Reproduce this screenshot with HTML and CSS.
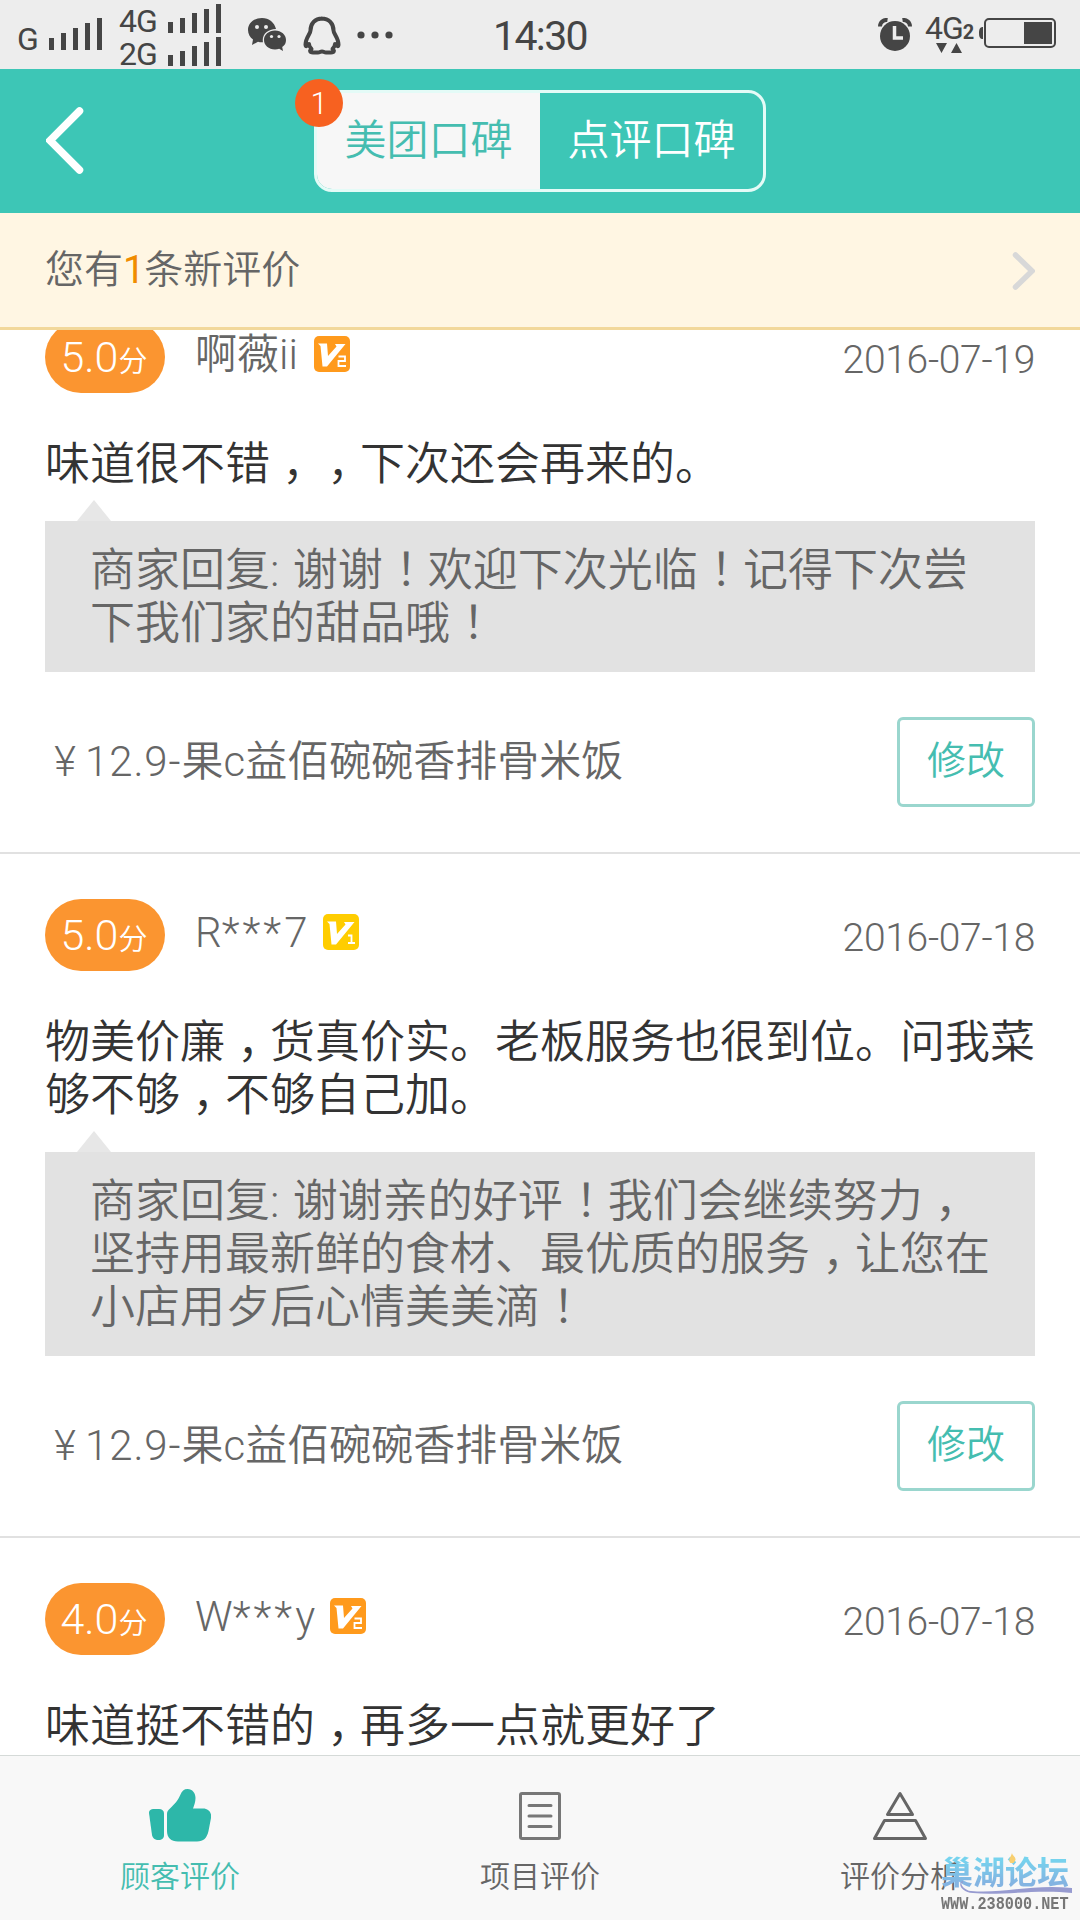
FILE: index.html
```html
<!DOCTYPE html>
<html lang="zh-CN">
<head>
<meta charset="utf-8">
<title>顾客评价</title>
<link rel="stylesheet" href="styles.css">
</head>
<body>
<div class="app">
  <div class="status">
    <div class="status-left">
      <span class="net net-g">G</span>
      <svg class="bars-one" width="54" height="32" viewBox="0 0 54 32"><path d="M0 20h5v12H0zM12 15h5v17h-5zM24 10h5v22h-5zM36 5h5v27h-5zM48 0h5v32h-5z"/></svg>
      <div class="dual">
        <div class="dual-row"><span class="net">4G</span><svg width="54" height="29" viewBox="0 0 54 29"><path d="M0 18h5v11H0zM12 14h5v15h-5zM24 9h5v20h-5zM36 5h5v24h-5zM48 0h5v29h-5z"/></svg></div>
        <div class="dual-row"><span class="net">2G</span><svg width="54" height="29" viewBox="0 0 54 29"><path d="M0 18h5v11H0zM12 14h5v15h-5zM24 9h5v20h-5zM36 5h5v24h-5zM48 0h5v29h-5z"/></svg></div>
      </div>
      <svg class="wechat" width="39" height="34" viewBox="0 0 39 34"><path d="M14 0C6 0 0 5.200 0 12c0 4 2 7.300 5 9.500L4 27l6-3.200c1.500.4 3 .6 5 .5C13.500 17 19 11.300 28 11 26.500 4.500 21 0 14 0z"/><path d="M27 12.500c-6.300 0-11 4.300-11 9.500s4.700 9.500 11 9.500c1.500 0 3-.2 4.200-.7L35 33l-.8-4C37 27.300 38 25 38 22c0-5.200-4.700-9.500-11-9.500z"/><g class="hole"><circle cx="9" cy="9" r="2"/><circle cx="18" cy="9" r="2"/><circle cx="23.500" cy="18.500" r="1.600"/><circle cx="31" cy="18.500" r="1.600"/></g></svg>
      <svg class="qq" width="38" height="39" viewBox="0 0 38 39"><path d="M19 2.500c-7 0-11.500 5-11.500 12 0 3-5 7.500-5 14 0 2 1.500 2.500 3.500-.5 0 2 1 3.500 2.500 5-2 1.500-2 3.500 1.500 3.500h5c2 0 2-1 4-1s2 1 4 1h5c3.500 0 3.500-2 1.500-3.500 1.500-1.500 2.500-3 2.500-5 2 3 3.500 2.500 3.500.5 0-6.500-5-11-5-14 0-7-4.500-12-12-12z"/></svg>
      <svg class="dots" width="36" height="8" viewBox="0 0 36 8"><circle cx="4" cy="4" r="3.600"/><circle cx="18" cy="4" r="3.600"/><circle cx="32" cy="4" r="3.600"/></svg>
    </div>
    <div class="clock">14:30</div>
    <div class="status-right">
      <svg width="34" height="34" viewBox="0 0 34 34"><circle cx="17" cy="18" r="15"/><path class="cut" d="M16.500 8v12H25"/><path class="ear" d="M2 8.500C2 4 6 1.500 9.500 2M32 8.500C32 4 28 1.500 24.500 2"/></svg>
      <div class="data"><div class="data-top"><span class="net">4G</span><b class="sim">2</b></div><svg width="26" height="10" viewBox="0 0 26 10"><path d="M0 0h11L5.500 10zM15 10h11L20.500 0z"/></svg></div>
      <svg width="78" height="30" viewBox="0 0 78 30"><path d="M4 9v12C1 21 0 19 0 15s1-6 4-6z"/><rect class="shell" x="6" y="1" width="70" height="28" rx="4"/><path d="M45 4h28v22H45z"/></svg>
    </div>
  </div>

  <header class="header">
    <svg class="back" width="38" height="67" viewBox="0 0 38 67"><path d="M33.500 4 4 33.500l29.500 29.500"/></svg>
    <div class="segment">
      <div class="seg seg-on">美团口碑</div>
      <div class="seg">点评口碑</div>
      <span class="badge">1</span>
    </div>
  </header>

  <div class="notice">
    <p class="notice-text">您有<span class="count">1</span>条新评价</p>
    <svg width="24" height="38" viewBox="0 0 24 38"><path d="M4.500 3 21 19 4.500 35"/></svg>
  </div>

  <main class="list">
    <article class="card card-scrolled">
      <div class="top">
        <div class="score">5.0<small>分</small></div>
        <div class="name name-a">啊薇ii</div>
        <svg class="level" width="36" height="36" viewBox="0 0 36 36"><rect width="36" height="36" rx="5" fill="#ff9a1c"/><path fill="#fff" d="M4 7.500h9L14 20l8.500-9.500L21 8h10.500L13 30.500H8.500L6.500 10z"/><path class="num" d="M24.500 20.500H31v4.500h-6.500v5H32"/></svg>
        <time class="date">2016-07-19</time>
      </div>
      <p class="comment">味道很不错<i>，</i><i>，</i>下次还会再来的。</p>
      <div class="reply">商家回复<span class="colon">: </span>谢谢<i>！</i>欢迎下次光临<i>！</i>记得下次尝<br>下我们家的甜品哦<i>！</i></div>
      <div class="foot"><span class="deal"><span class="yen">¥</span><span class="price">12.9-</span>果c益佰碗碗香排骨米饭</span><button class="edit">修改</button></div>
    </article>
    <article class="card">
      <div class="top">
        <div class="score">5.0<small>分</small></div>
        <div class="name name-r">R<span class="stars">***</span>7</div>
        <svg class="level" width="36" height="36" viewBox="0 0 36 36"><rect width="36" height="36" rx="5" fill="#ffcd00"/><path fill="#fff" d="M4 7.500h9L14 20l8.500-9.500L21 8h10.500L13 30.500H8.500L6.500 10z"/><path class="num" d="M25 21.500h3.500V29M25 29h7"/></svg>
        <time class="date">2016-07-18</time>
      </div>
      <p class="comment">物美价廉<i>，</i>货真价实。老板服务也很到位。问我菜<br>够不够<i>，</i>不够自己加。</p>
      <div class="reply">商家回复<span class="colon">: </span>谢谢亲的好评<i>！</i>我们会继续努力<i>，</i><br>坚持用最新鲜的食材、最优质的服务<i>，</i>让您在<br>小店用歺后心情美美滴<i>！</i></div>
      <div class="foot"><span class="deal"><span class="yen">¥</span><span class="price">12.9-</span>果c益佰碗碗香排骨米饭</span><button class="edit">修改</button></div>
    </article>
    <article class="card">
      <div class="top">
        <div class="score">4.0<small>分</small></div>
        <div class="name name-w">W<span class="stars">***</span>y</div>
        <svg class="level" width="36" height="36" viewBox="0 0 36 36"><rect width="36" height="36" rx="5" fill="#ff9a1c"/><path fill="#fff" d="M4 7.500h9L14 20l8.500-9.500L21 8h10.500L13 30.500H8.500L6.500 10z"/><path class="num" d="M24.500 20.500H31v4.500h-6.500v5H32"/></svg>
        <time class="date">2016-07-18</time>
      </div>
      <p class="comment">味道挺不错的<i>，</i>再多一点就更好了</p>
    </article>
  </main>

  <nav class="tabs">
    <div class="tab tab-on">
      <svg width="62" height="54" viewBox="0 0 62 54"><path d="M0 24c0-3 2-4 5-4h5c3 0 5 1.500 5 4.500V46c0 3.500-2 5-5.500 5S3.500 49 3 46z"/><path d="M18 25c0-2.500 1-3.500 3-5.500 5-5 8-8 10.500-14C32.800 2 35 0 38.500 0c5 0 8 4 8 9 0 4-1.500 7.500-2.500 10.500h10c5.500 0 9 4 8 9.500L59.500 42c-1.500 7-5 10.500-11.500 10.500H29c-7 0-11-4-11-10.500z"/></svg>
      <span>顾客评价</span>
    </div>
    <div class="tab">
      <svg class="line" width="62" height="54" viewBox="0 0 62 54"><rect x="11.500" y="4.500" width="39" height="45" rx="1.500"/><path d="M20 16.500h22M20 27h22M20 37.500h22"/></svg>
      <span>项目评价</span>
    </div>
    <div class="tab">
      <svg class="line pyramid" width="62" height="54" viewBox="0 0 62 54"><path d="M31 4.500 18.500 25.500h25zM15.500 31.500h31L56.500 49.500h-51z"/></svg>
      <span>评价分析</span>
    </div>
  </nav>

  <div class="forum">
    <div class="forum-name">巢湖论坛</div>
    <svg class="wave" width="132" height="16" viewBox="0 0 132 16"><path d="M22 4c-4-3-1 7 8 8 30 3 60-7 101-3v5C95 10 60 17 32 14 20 13 16 4 22 2z"/></svg>
    <svg class="flame" width="8" height="10" viewBox="0 0 8 10"><path d="M4 0c0 2 4 4 3.500 7L5.500 10h-3C-.5 7 3 4 4 0z"/></svg>
    <div class="forum-url">WWW.238000.NET</div>
  </div>
</div>
</body>
</html>
```
FILE: styles.css
```css
* { box-sizing: border-box; }
body { margin: 0; }
p { margin: 0; }
svg { display: block; flex: none; }

.app {
  position: relative;
  display: flex;
  flex-direction: column;
  width: 1080px;
  height: 1920px;
  overflow: hidden;
  background: #fff;
  color: #666;
  font-family: Roboto, "Noto Sans CJK SC", sans-serif;
  font-weight: 350;
  white-space: nowrap;
}

/* status bar */
.status {
  display: grid;
  grid-template-columns: 1fr auto 1fr;
  height: 69px;
  flex: none;
  background: #ededed;
  color: #454545;
  fill: #454545;
  font-weight: 400;
}
.status-left { display: flex; padding-left: 17px; }
.net { font-size: 32px; line-height: 24px; letter-spacing: -1px; }
.net-g { width: 32px; padding-top: 27px; }
.bars-one { margin-top: 18px; }
.dual { margin: 4px 0 0 16px; display: flex; flex-direction: column; gap: 4px; }
.dual-row { display: flex; align-items: flex-end; }
.dual-row .net { width: 49px; }
.wechat { margin: 18px 0 0 26px; }
.hole { fill: #ededed; }
.qq { margin: 16px 0 0 16px; fill: none; stroke: #454545; stroke-width: 4; stroke-linejoin: round; }
.dots { margin: 31px 0 0 16px; }
.clock { font-size: 41px; line-height: 72px; letter-spacing: -1.6px; }
.status-right { display: flex; justify-content: flex-end; padding: 18px 23px 0 0; }
.cut { fill: none; stroke: #ededed; stroke-width: 3.500; }
.ear { fill: none; stroke: #454545; stroke-width: 4; }
.data { width: 54px; margin: -2px 0 0 13px; }
.data-top { display: flex; align-items: flex-end; margin-bottom: 3px; }
.sim { font-size: 20px; line-height: 16px; }
.data svg { margin-left: 11px; }
.shell { fill: none; stroke: #454545; stroke-width: 2; }

/* header */
.header {
  display: flex;
  align-items: flex-start;
  height: 144px;
  flex: none;
  padding: 21px 0 0 46px;
  background: #3dc6b6;
}
.back { margin-top: 17px; fill: none; stroke: #fff; stroke-width: 7.500; stroke-linecap: round; }
.segment {
  position: relative;
  display: flex;
  width: 452px;
  height: 102px;
  margin-left: 230px;
  border: 3px solid #e4fbf7;
  border-radius: 18px;
}
.seg { flex: 1; color: #fff; font-size: 42px; line-height: 96px; text-align: center; }
.seg-on { border-radius: 15px 0 0 15px; background: #f7f7f7; color: #45bdb0; }
.badge {
  position: absolute;
  left: -22px;
  top: -14px;
  width: 48px;
  height: 48px;
  border-radius: 50%;
  background: #f76120;
  color: #fff;
  font-size: 31px;
  line-height: 49px;
  text-align: center;
}

/* new review notice */
.notice {
  display: flex;
  justify-content: space-between;
  align-items: center;
  height: 117px;
  flex: none;
  padding: 0 45px;
  border-bottom: 3px solid #f2d89b;
  background: #fff6e3;
}
.notice svg { margin-top: 2px; fill: none; stroke: #d8d8d8; stroke-width: 5.500; stroke-linecap: round; }
.notice-text { font-size: 39px; line-height: 60px; }
.count { color: #f08c00; font-weight: 400; letter-spacing: -.6px; }

/* reviews */
.list { flex: 1; min-height: 0; overflow: hidden; }
.card { padding: 45px; border-bottom: 2px solid #e1e1e1; }
.card-scrolled { margin-top: -54px; }
.top { display: flex; height: 72px; align-items: center; }
.score {
  display: flex;
  justify-content: center;
  align-items: baseline;
  width: 120px;
  height: 72px;
  padding-right: 2px;
  border-radius: 36px;
  background: #fb9530;
  color: #fff;
  font-size: 43px;
  line-height: 72px;
}
.score small { font-size: 29px; }
.name { margin: 0 18px 4px 30px; font-size: 42px; line-height: 60px; }
.name-a { margin-right: 16px; }
.name-r { width: 110px; }
.name-w { width: 117px; }
.stars { letter-spacing: 3px; }
.level { margin-bottom: 6px; }
.num { fill: none; stroke: #fff; stroke-width: 1.800; }
.date { margin: 5px 0 0 auto; font-size: 39px; line-height: 60px; letter-spacing: -.3px; }
.comment { padding-top: 45px; margin-bottom: -1px; color: #333; font-size: 45px; line-height: 53px; }

/* full-width marks set near the middle of their square */
.comment i, .reply i {
  display: inline-block;
  width: 1em;
  padding-left: .27em;
  font-family: "Noto Sans CJK SC", sans-serif;
  font-style: normal;
  font-feature-settings: "halt";
  line-height: 1;
}
.colon { letter-spacing: 1.200px; }
.reply {
  position: relative;
  margin-top: 31px;
  padding: 23px 45px 22px;
  background: #e2e2e2;
  font-size: 45px;
  line-height: 53px;
}
.reply::before {
  content: "";
  position: absolute;
  left: 32px;
  top: -21px;
  border: solid transparent;
  border-width: 0 17px 21px;
  border-bottom-color: #e7e7e7;
}
.foot { display: flex; justify-content: space-between; align-items: center; margin-top: 45px; }
.deal { font-size: 42px; line-height: 60px; }
.yen { display: inline-block; width: 40px; text-align: center; }
.price { letter-spacing: .9px; }
.edit {
  width: 138px;
  height: 90px;
  padding: 0 0 2px;
  border: 3px solid #9ad6ce;
  border-radius: 6px;
  background: #fff;
  color: #45bdb0;
  font: 350 39px/80px Roboto, "Noto Sans CJK SC", sans-serif;
}

/* bottom tabs */
.tabs { display: flex; height: 165px; flex: none; border-top: 1px solid #d5dad8; background: #f8f8f8; }
.tab { flex: 1; display: flex; flex-direction: column; align-items: center; padding-top: 33px; font-size: 30px; line-height: 40px; }
.tab span { margin-top: 14px; }
.tab-on { color: #45bdb0; fill: #2db7a9; }
.line { fill: none; stroke: #777; stroke-width: 3; stroke-linecap: round; stroke-linejoin: round; }
.pyramid { stroke: #666; }

/* forum mark over the corner */
.forum { position: absolute; left: 941px; top: 1849px; width: 132px; }
.forum-name {
  background: linear-gradient(#76d3ee 25%, #83b4e2 80%);
  -webkit-background-clip: text;
  background-clip: text;
  color: transparent;
  font: 700 32px/42px "Noto Sans CJK SC", sans-serif;
}
.wave { position: absolute; left: 0; top: 30px; fill: #979bd0; }
.flame { position: absolute; left: 67px; top: 4px; fill: #f8cf70; }
.forum-url { margin-top: 3px; color: #777; font: 700 15.200px/20px "Liberation Mono", monospace; transform: scaleY(1.15); }
```
